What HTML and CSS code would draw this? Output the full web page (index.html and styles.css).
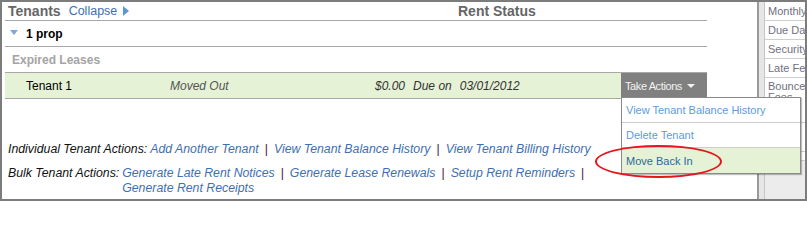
FILE: index.html
```html
<!DOCTYPE html>
<html>
<head>
<meta charset="utf-8">
<link rel="stylesheet" href="styles.css">
</head>
<body>
<div class="frame">
  <div class="main">
    <div class="table">
      <div class="hdr">
        <div class="hdr-left">
          <span class="hdr-title">Tenants</span>
          <a class="collapse">Collapse</a>
          <span class="tri-right"></span>
        </div>
        <span class="hdr-title">Rent Status</span>
      </div>
      <div class="prop-row">
        <span class="tri-down"></span>
        <span class="prop">1 prop</span>
      </div>
      <div class="expired-row">Expired Leases</div>
      <div class="tenant-row">
        <span class="c-name">Tenant 1</span>
        <span class="c-status">Moved Out</span>
        <span class="c-amt">$0.00</span>
        <span class="c-due">Due on</span>
        <span class="c-date">03/01/2012</span>
        <span class="spacer"></span>
        <span class="btn">Take Actions <span class="tri-btn"></span></span>
      </div>
    </div>
    <div class="actions">
      <div class="act-row">
        <span class="label">Individual Tenant Actions:</span>
        <div class="links">
          <a>Add Another Tenant</a><span class="sep">|</span><a>View Tenant Balance History</a><span class="sep">|</span><a>View Tenant Billing History</a>
        </div>
      </div>
      <div class="act-row act-row2">
        <span class="label">Bulk Tenant Actions:</span>
        <div class="links">
          <a>Generate Late Rent Notices</a><span class="sep">|</span><a>Generate Lease Renewals</a><span class="sep">|</span><a>Setup Rent Reminders</a><span class="sep">|</span> <a>Generate Rent Receipts</a>
        </div>
      </div>
    </div>
  </div>
  <div class="strip"></div>
  <div class="side">
    <div class="srow">Monthly Rent</div>
    <div class="srow">Due Date</div>
    <div class="srow">Security Deposit</div>
    <div class="srow">Late Fee</div>
    <div class="srow srow-tall">Bounce Fees</div>
    <div class="srow srow-mid">Notes</div>
    <div class="srow srow-mid2"></div>
  </div>

  <div class="menu">
    <div class="mi">View Tenant Balance History</div>
    <div class="mi">Delete Tenant</div>
    <div class="mi mi-active">Move Back In</div>
  </div>
  <div class="circle"></div>
</div>
</body>
</html>
```

FILE: styles.css
```css
* { box-sizing: border-box; }
html, body { margin: 0; padding: 0; background: #fff; }
body { font-family: "Liberation Sans", Arial, sans-serif; font-size: 12px; color: #000; }
a { cursor: pointer; }

.frame {
  position: relative;
  width: 807px;
  height: 201px;
  border: 2px solid #7c7c7c;
  display: flex;
  overflow: hidden;
}

.main {
  width: 755px;
  flex: none;
  padding-left: 3px;
}
.table { width: 702px; }

.hdr {
  height: 19px;
  border-bottom: 1px solid #a8a8a8;
  display: flex;
  align-items: center;
  padding-bottom: 1px;
}
.hdr-left {
  width: 453px;
  display: flex;
  align-items: center;
  padding-left: 3px;
}
.hdr-title { font-weight: bold; font-size: 14px; color: #666; }
.collapse { color: #3e6fb0; font-size: 12.5px; margin-left: 8px; }
.tri-right {
  width: 0; height: 0;
  border-top: 5px solid transparent;
  border-bottom: 5px solid transparent;
  border-left: 6px solid #5f93d3;
  margin-left: 6px;
}

.prop-row {
  height: 26px;
  border-bottom: 1px solid #a8a8a8;
  display: flex;
  align-items: center;
  padding-left: 5px;
}
.tri-down {
  width: 0; height: 0;
  border-left: 4px solid transparent;
  border-right: 4px solid transparent;
  border-top: 5px solid #7ea8d8;
  margin-right: 8px;
  margin-top: -2px;
}
.prop { font-weight: bold; font-size: 12px; }

.expired-row {
  height: 26px;
  border-bottom: 1px solid #a8a8a8;
  display: flex;
  align-items: center;
  padding-left: 7px;
  font-weight: bold;
  color: #a4a4a4;
}

.tenant-row {
  height: 26px;
  background: #e5f2d5;
  border-bottom: 1px solid #a8a8a8;
  display: flex;
  align-items: center;
}
.c-name { width: 165px; padding-left: 21px; flex: none; }
.c-status { width: 205px; font-style: italic; color: #555; flex: none; }
.c-amt, .c-due, .c-date { font-style: italic; color: #333; }
.c-due { margin-left: 8px; }
.c-date { margin-left: 8px; }
.spacer { flex: 1; }
.btn {
  width: 86px;
  height: 25px;
  background: #808080;
  color: #f2f2f2;
  font-size: 11px;
  letter-spacing: -0.4px;
  display: flex;
  align-items: center;
  padding-left: 4px;
  margin-bottom: -1px;
  align-self: flex-start;
}
.tri-btn {
  width: 0; height: 0;
  border-left: 4px solid transparent;
  border-right: 4px solid transparent;
  border-top: 4px solid #f2f2f2;
  margin-left: 5px;
}

.actions { margin-top: 43px; padding-left: 3px; font-size: 12.3px; }
.act-row { display: flex; line-height: 15px; font-style: italic; }
.act-row2 { margin-top: 9px; }
.label { color: #111; margin-right: 3px; white-space: nowrap; }
.links { flex: none; width: 585px; }
.links a { color: #3e6fb0; white-space: nowrap; }
.sep { color: #4e1446; font-style: normal; margin: 0 6px; }

.strip {
  width: 8px;
  flex: none;
  background: #e6e6e6;
  border-left: 2px solid #9a9a9a;
  border-right: 1px solid #c6c6c6;
}
.side {
  flex: 1;
  background: #ececec;
  overflow: hidden;
  font-size: 11px;
  color: #6f6f80;
}
.srow {
  height: 19px;
  background: #fff;
  border-bottom: 1px solid #cfcfcf;
  padding: 3px 0 0 3px;
  white-space: nowrap;
}
.srow-tall { height: 45px; white-space: normal; width: 50px; line-height: 11px; }
.srow-mid { height: 29px; }
.srow-mid2 { height: 9px; }

.menu {
  position: absolute;
  left: 619px;
  top: 95px;
  width: 180px;
  height: 77px;
  background: #fff;
  border: 1px solid #8a8a8a;
  box-shadow: 1px 1px 1px rgba(0,0,0,0.25);
  font-size: 11px;
}
.mi {
  height: 25px;
  border-bottom: 1px solid #cdcdcd;
  display: flex;
  align-items: center;
  padding-left: 4px;
  color: #5e9bdc;
}
.mi-active {
  border-bottom: 0;
  background: #e5f2d5;
  color: #2a6a9c;
  height: 25px;
}

.circle {
  position: absolute;
  left: 593px;
  top: 143px;
  width: 127px;
  height: 33px;
  border: 2px solid #e3171c;
  border-radius: 50%;
}
```
